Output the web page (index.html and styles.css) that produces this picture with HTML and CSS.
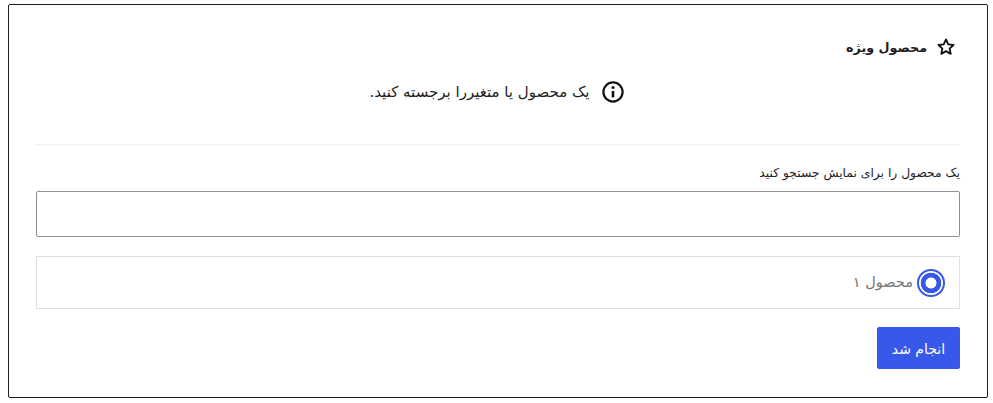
FILE: index.html
```html
<!DOCTYPE html>
<html lang="fa" dir="rtl">
<head>
<meta charset="utf-8">
<title>محصول ویژه</title>
<link rel="stylesheet" href="styles.css">
</head>
<body>

<div class="card">
  <div class="card-head">
    <svg class="star-icon" viewBox="0 0 24 24" width="20" height="20" fill="none" stroke="#111" stroke-width="2.2" stroke-linejoin="round">
      <path d="M12 3l2.7 5.9 6.4.7-4.8 4.3 1.4 6.3L12 17l-5.7 3.2 1.4-6.3-4.8-4.3 6.4-.7z"/>
    </svg>
    <h2>محصول ویژه</h2>
  </div>

  <div class="notice">
    <svg class="info-icon" viewBox="0 0 24 24" width="24" height="24" fill="none" stroke="#111" stroke-width="2.2">
      <circle cx="12" cy="12" r="9.6"/>
      <path d="M12 11v6.4" stroke-width="2.6"/>
      <circle cx="12" cy="7.4" r="1.5" fill="#111" stroke="none"/>
    </svg>
    <p>یک محصول یا متغیررا برجسته کنید.</p>
  </div>

  <hr class="divider">

  <label class="search-label" for="search">یک محصول را برای نمایش جستجو کنید</label>
  <input class="search-input" type="text" id="search">

  <div class="result">
    <span class="radio"></span>
    <span class="result-name">محصول ۱</span>
  </div>

  <div class="actions">
    <button class="done-btn" type="button">انجام شد</button>
  </div>
</div>

</body>
</html>
```

FILE: styles.css
```css
* {
  box-sizing: border-box;
}

body {
  margin: 0;
  padding: 4px 5px 0 8px;
  background-color: #fff;
  font-family: "DejaVu Sans", "Noto Sans", sans-serif;
  color: #1e1e1e;
}

.card {
  height: 394px;
  padding: 32px 27px 0 27px;
  border: 1px solid #1e1e1e;
  border-radius: 2px;
}

.card-head {
  display: flex;
  align-items: center;
  gap: 9px;
  height: 20px;
  padding-right: 4px;
}

.card-head h2 {
  margin: 0;
  font-size: 12.7px;
  font-weight: 700;
}

.notice {
  display: flex;
  align-items: center;
  justify-content: center;
  gap: 11px;
  height: 24px;
  margin-top: 23px;
  padding-right: 2px;
}

.notice p {
  margin: 0;
  font-size: 15px;
}

.divider {
  height: 1px;
  margin: 40px 0 0;
  border: none;
  background-color: #f0f0f0;
}

.search-label {
  display: block;
  margin-top: 20px;
  font-size: 12.3px;
  line-height: 16px;
}

.search-input {
  display: block;
  width: 100%;
  height: 46px;
  margin-top: 10px;
  border: 1px solid #8c8f94;
  border-radius: 2px;
  background-color: #fff;
}

.result {
  display: flex;
  align-items: center;
  gap: 4px;
  height: 53px;
  margin-top: 19px;
  padding-right: 14px;
  border: 1px solid #e0e0e0;
}

.radio {
  width: 28px;
  height: 28px;
  border: 2px solid #3858e9;
  border-radius: 50%;
  background: radial-gradient(circle, #fff 0 5.2px, #3858e9 5.8px 10px, #fff 10.6px);
}

.result-name {
  margin-bottom: 2px;
  font-size: 14.5px;
  color: #757575;
}

.actions {
  display: flex;
  margin-top: 18px;
}

.done-btn {
  width: 83px;
  height: 42px;
  padding-top: 2px;
  border: none;
  border-radius: 2px;
  background-color: #3858e9;
  font-family: inherit;
  font-size: 14px;
  color: #fff;
}
```
